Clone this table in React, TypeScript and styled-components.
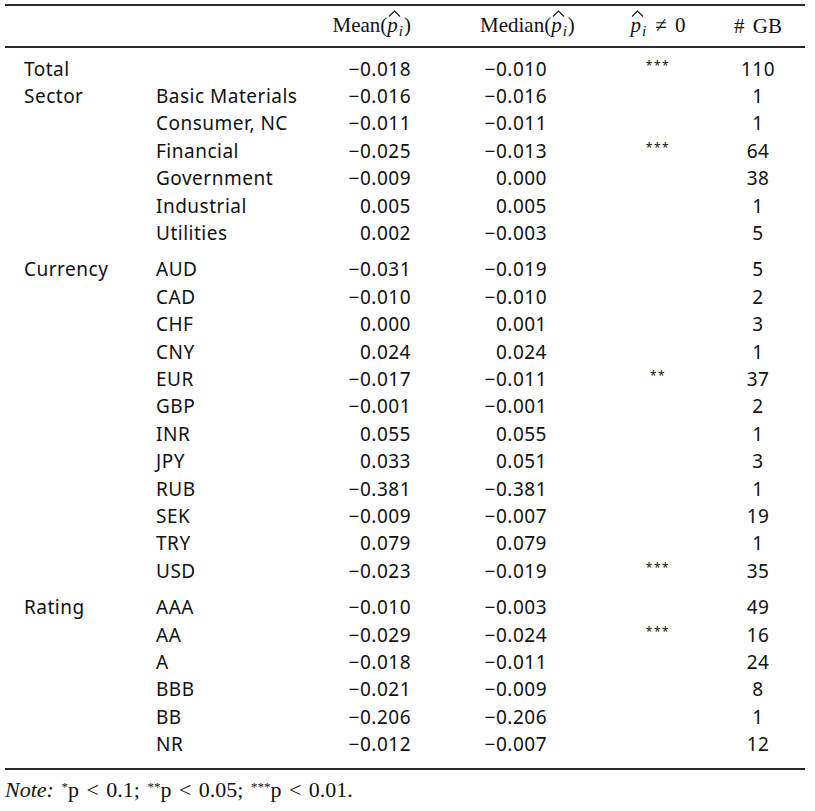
import React from "react";
import styled, { createGlobalStyle } from "styled-components";

const Global = createGlobalStyle`
  html, body { margin: 0; padding: 0; background: #fff; }
  body { color: #111; }
`;

const Page = styled.div`
  width: 800px;
  margin-left: 5px;
  padding-top: 4px;
`;

const Rule = styled.div<{ $h?: number }>`
  height: ${(p) => p.$h ?? 2}px;
  background: #2a2a2a;
`;

const COLS = "19px 132px 144px 111px 189px 116px 84px";

const HeaderRow = styled.div`
  display: grid;
  grid-template-columns: ${COLS};
  height: 40px;
  align-items: center;
  font-family: "Liberation Serif", serif;
  font-size: 21px;
  color: #111;
`;

const HeadCell = styled.div<{ $align: "left" | "right" | "center"; $padL?: number; $padR?: number }>`
  text-align: ${(p) => p.$align};
  padding-left: ${(p) => p.$padL ?? 0}px;
  padding-right: ${(p) => p.$padR ?? 0}px;
  white-space: nowrap;
  word-spacing: ${(p) => (p.$align === "center" ? 3 : 0)}px;
`;

const HatWrap = styled.span`
  position: relative;
  display: inline-block;
  font-style: italic;
`;

const HatMark = styled.svg`
  position: absolute;
  left: 1px;
  top: -3px;
  width: 13px;
  height: 7px;
`;

const Sub = styled.span`
  font-size: 15px;
  font-style: italic;
  vertical-align: -4px;
  margin-left: 1px;
  margin-right: 1px;
`;

const PHat = () => (
  <>
    <HatWrap>
      p
      <HatMark viewBox="0 0 13 7">
        <path d="M1 6.5 L6.5 1 L12 6.5" fill="none" stroke="#111" strokeWidth="1.1" />
      </HatMark>
    </HatWrap>
    <Sub>i</Sub>
  </>
);

const Body = styled.div`
  padding: 7px 0 10px;
  font-family: "Noto Sans", sans-serif;
  font-size: 19px;
  letter-spacing: 0.5px;
  color: #111;
`;

const Group = styled.div`
  & + & {
    margin-top: 9px;
  }
`;

const Row = styled.div`
  display: grid;
  grid-template-columns: ${COLS};
  height: 27.4px;
  align-items: center;
  white-space: nowrap;
`;

const Label = styled.div``;

const Num = styled.div<{ $padR?: number }>`
  text-align: right;
  padding-right: ${(p) => p.$padR ?? 0}px;
`;

const Stars = styled.div`
  text-align: center;
  font-size: 12px;
  letter-spacing: 1.5px;
  transform: translateY(-3px);
`;

const Count = styled.div`
  text-align: center;
`;

const Note = styled.div`
  font-family: "Liberation Serif", serif;
  font-size: 22px;
  padding-top: 7px;
  color: #111;
  word-spacing: 2px;
`;

const NoteLabel = styled.span`
  font-style: italic;
`;

const Sup = styled.sup`
  font-size: 13px;
  vertical-align: 6px;
  line-height: 0;
`;

type R = [string, string, string, string, string, string];

const groups: R[][] = [
  [
    ["Total", "", "−0.018", "−0.010", "***", "110"],
    ["Sector", "Basic Materials", "−0.016", "−0.016", "", "1"],
    ["", "Consumer, NC", "−0.011", "−0.011", "", "1"],
    ["", "Financial", "−0.025", "−0.013", "***", "64"],
    ["", "Government", "−0.009", "0.000", "", "38"],
    ["", "Industrial", "0.005", "0.005", "", "1"],
    ["", "Utilities", "0.002", "−0.003", "", "5"],
  ],
  [
    ["Currency", "AUD", "−0.031", "−0.019", "", "5"],
    ["", "CAD", "−0.010", "−0.010", "", "2"],
    ["", "CHF", "0.000", "0.001", "", "3"],
    ["", "CNY", "0.024", "0.024", "", "1"],
    ["", "EUR", "−0.017", "−0.011", "**", "37"],
    ["", "GBP", "−0.001", "−0.001", "", "2"],
    ["", "INR", "0.055", "0.055", "", "1"],
    ["", "JPY", "0.033", "0.051", "", "3"],
    ["", "RUB", "−0.381", "−0.381", "", "1"],
    ["", "SEK", "−0.009", "−0.007", "", "19"],
    ["", "TRY", "0.079", "0.079", "", "1"],
    ["", "USD", "−0.023", "−0.019", "***", "35"],
  ],
  [
    ["Rating", "AAA", "−0.010", "−0.003", "", "49"],
    ["", "AA", "−0.029", "−0.024", "***", "16"],
    ["", "A", "−0.018", "−0.011", "", "24"],
    ["", "BBB", "−0.021", "−0.009", "", "8"],
    ["", "BB", "−0.206", "−0.206", "", "1"],
    ["", "NR", "−0.012", "−0.007", "", "12"],
  ],
];

export default function App() {
  return (
    <>
      <Global />
      <Page>
        <Rule />
        <HeaderRow>
          <span />
          <span />
          <span />
          <HeadCell $align="right">
            Mean(<PHat />)
          </HeadCell>
          <HeadCell $align="left" $padL={69}>
            Median(<PHat />)
          </HeadCell>
          <HeadCell $align="center">
            <PHat /> ≠ 0
          </HeadCell>
          <HeadCell $align="center"># GB</HeadCell>
        </HeaderRow>
        <Rule />
        <Body>
          {groups.map((g, gi) => (
            <Group key={gi}>
              {g.map((r, ri) => (
                <Row key={ri}>
                  <span />
                  <Label>{r[0]}</Label>
                  <Label>{r[1]}</Label>
                  <Num>{r[2]}</Num>
                  <Num $padR={53}>{r[3]}</Num>
                  <Stars>{r[4]}</Stars>
                  <Count>{r[5]}</Count>
                </Row>
              ))}
            </Group>
          ))}
        </Body>
        <Rule />
        <Note>
          <NoteLabel>Note:</NoteLabel> <Sup>*</Sup>p &lt; 0.1; <Sup>**</Sup>p &lt; 0.05; <Sup>***</Sup>p &lt; 0.01.
        </Note>
      </Page>
    </>
  );
}
